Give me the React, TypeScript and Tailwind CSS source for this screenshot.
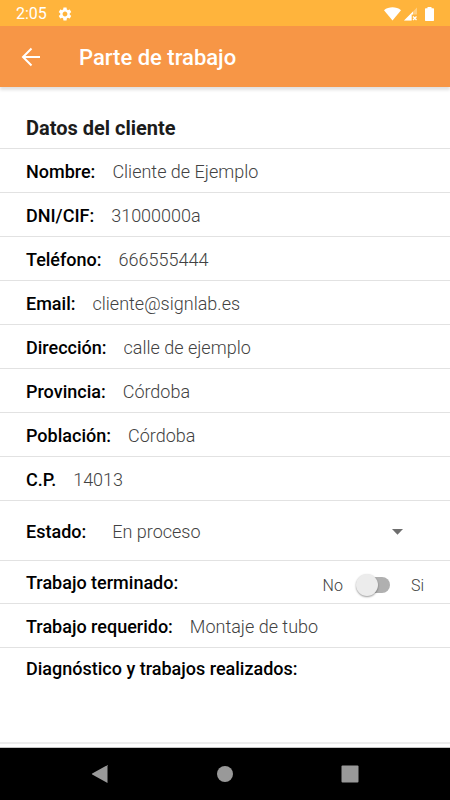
import type { ReactNode } from 'react'
import clsx from 'clsx'

const clientFields = [
  { id: 'nombre', label: 'Nombre:', value: 'Cliente de Ejemplo' },
  { id: 'dni', label: 'DNI/CIF:', value: '31000000a' },
  { id: 'telefono', label: 'Teléfono:', value: '666555444' },
  { id: 'email', label: 'Email:', value: 'cliente@signlab.es' },
  { id: 'direccion', label: 'Dirección:', value: 'calle de ejemplo' },
  { id: 'provincia', label: 'Provincia:', value: 'Córdoba' },
  { id: 'poblacion', label: 'Población:', value: 'Córdoba' },
  { id: 'cp', label: 'C.P.', value: '14013' },
]

const labelClass = 'shrink-0 text-lg leading-6 font-medium text-black'
const valueClass = 'min-w-0 flex-1 bg-transparent text-lg leading-6 font-light text-[#424242] outline-none'

export default function App() {
  return (
    <div className="flex min-h-screen flex-col bg-white font-['Roboto',sans-serif]">
      <StatusBar />
      <AppBar />

      <main className="flex-1 border-b border-[#c4c4c4]">
        <form>
          <h2 className="flex h-[62px] items-center border-b border-[#e2e2e2] px-[26px] pt-5 text-xl leading-6 font-bold text-[#1c1c1c]">
            Datos del cliente
          </h2>

          {clientFields.map((field) => (
            <TextField key={field.id} {...field} />
          ))}

          <Row className="h-[60px] gap-[26px] pt-[2px]">
            <label htmlFor="estado" className={labelClass}>Estado:</label>
            <div className="relative flex flex-1 items-center">
              <select id="estado" className={clsx(valueClass, 'appearance-none')} defaultValue="En proceso">
                <option>En proceso</option>
                <option>Terminado</option>
              </select>
              <svg viewBox="0 0 11 6" className="pointer-events-none absolute right-[21px] h-[6px] w-[11px] fill-[#6e6e6e]">
                <path d="M0 0h11L5.500 5.700z" />
              </svg>
            </div>
          </Row>

          <Row className="h-[43px] pt-[2px]">
            <label htmlFor="terminado" className={labelClass}>Trabajo terminado:</label>
            <div className="ml-auto flex items-center pt-1 text-base font-light text-[#424242]">
              <span className="pt-[2px]">No</span>
              <span className="relative mr-[21px] ml-[13px] flex h-6 w-[34px] items-center">
                <input id="terminado" type="checkbox" role="switch" className="peer absolute inset-0 z-10 opacity-0" />
                <span className="ml-1 h-4 w-[30px] rounded-full bg-[#b0b0b0] peer-checked:bg-[#fbc99f]" />
                <span className="absolute left-0 h-[22px] w-[22px] rounded-full bg-[#ececec] shadow-[0_1px_2px_rgba(0,0,0,0.4)] peer-checked:left-3 peer-checked:bg-[#f79646]" />
              </span>
              <span className="pt-[2px]">Si</span>
            </div>
          </Row>

          <TextField id="requerido" label="Trabajo requerido:" value="Montaje de tubo" />

          <div className="flex h-24 flex-col border-b-2 border-[#ececec] px-[26px] pt-[9px]">
            <label htmlFor="diagnostico" className={labelClass}>Diagnóstico y trabajos realizados:</label>
            <textarea id="diagnostico" className={clsx(valueClass, 'resize-none')} />
          </div>
        </form>
      </main>

      <SystemNav />
    </div>
  )
}

function Row({ children, className }: { children: ReactNode; className?: string }) {
  return <div className={clsx('flex items-center border-b border-[#e2e2e2] px-[26px]', className)}>{children}</div>
}

function TextField({ id, label, value }: { id: string; label: string; value: string }) {
  return (
    <Row className="h-11 gap-[17px] pt-[2px]">
      <label htmlFor={id} className={labelClass}>{label}</label>
      <input id={id} type="text" defaultValue={value} className={valueClass} />
    </Row>
  )
}

function StatusBar() {
  return (
    <div className="flex h-[26px] items-center bg-[#ffb43c] px-4 pt-[2px] text-white">
      <span className="text-base leading-6">2:05</span>
      <svg viewBox="0 0 24 24" className="ml-[10px] h-4 w-4 fill-current">
        <path d="M19.140 12.940c.04-.3.060-.61.060-.94 0-.32-.02-.64-.07-.94l2.030-1.580c.18-.14.230-.41.120-.61l-1.920-3.320c-.12-.22-.37-.29-.59-.22l-2.390.96c-.5-.38-1.030-.7-1.620-.94l-.36-2.540c-.04-.24-.24-.41-.48-.41h-3.840c-.24 0-.43.170-.47.410l-.36 2.540c-.59.240-1.130.570-1.620.940l-2.390-.96c-.22-.08-.47 0-.59.220L2.740 8.870c-.12.210-.08.470.120.610l2.030 1.580c-.05.300-.09.630-.09.940s.02.640.070.940l-2.030 1.580c-.18.140-.23.410-.12.610l1.920 3.320c.12.220.37.290.59.220l2.390-.96c.5.380 1.030.700 1.620.940l.36 2.540c.05.240.24.410.48.410h3.840c.24 0 .44-.17.470-.41l.36-2.540c.59-.24 1.130-.56 1.620-.94l2.390.96c.22.080.47 0 .59-.22l1.920-3.320c.12-.22.070-.47-.12-.61l-2.010-1.580zM12 15.600c-1.980 0-3.600-1.620-3.600-3.600s1.620-3.600 3.600-3.600 3.600 1.620 3.600 3.600-1.620 3.600-3.600 3.600z" />
      </svg>

      <div className="ml-auto flex items-center gap-[3px]">
        <svg viewBox="0 0 17 14" className="h-[14px] w-[17px] fill-current">
          <path d="M0 3.200C4.800-.6 12.200-.6 17 3.200L8.500 13.500z" />
        </svg>
        <svg viewBox="0 0 14 14" className="h-[14px] w-[14px]">
          <path d="M13 0.500v7H8v6H0z" fill="#fff" fillOpacity="0.35" />
          <path d="M9 4.500v3H7.500v6H0z" fill="#fff" />
          <path d="M9 9.500l3.500 3.500M12.500 9.500L9 13" stroke="#fff" strokeWidth="1.300" fill="none" />
        </svg>
        <svg viewBox="0 0 9 14" className="ml-1 h-[14px] w-[9px] fill-current">
          <path d="M2.500 0h4v1.200H8.300q.7 0 .7.700V13.300q0 .7-.7.700H.7q-.7 0-.7-.7V1.900q0-.7.7-.7h1.800z" />
        </svg>
      </div>
    </div>
  )
}

function AppBar() {
  return (
    <header className="z-10 flex h-[61px] items-center gap-[38px] bg-[#f79646] pl-[21px] text-white shadow-[0_3px_3px_rgba(0,0,0,0.12)]">
      <button type="button" aria-label="Volver" className="flex h-10 w-5 items-center">
        <svg viewBox="0 0 20 20" className="h-5 w-5 fill-none stroke-current stroke-2">
          <path d="M19 10H2.500M10.500 1.500L2 10l8.500 8.500" />
        </svg>
      </button>
      <h1 className="pt-[2px] text-[22px] leading-7 font-medium">Parte de trabajo</h1>
    </header>
  )
}

function SystemNav() {
  return (
    <nav className="flex h-[52px] items-center justify-center gap-[107px] bg-black">
      <button type="button" aria-label="Atrás">
        <svg viewBox="0 0 18 18" className="h-[18px] w-[18px] fill-[#999]">
          <path d="M16.500.3V17.700q0 .3-.4.100L1.200 9.500q-.7-.5 0-1L16.100.2q.4-.2.400.1z" />
        </svg>
      </button>
      <button type="button" aria-label="Inicio">
        <svg viewBox="0 0 18 18" className="h-[18px] w-[18px] fill-[#999]">
          <circle cx="9" cy="9" r="8" />
        </svg>
      </button>
      <button type="button" aria-label="Recientes">
        <svg viewBox="0 0 18 18" className="h-[18px] w-[18px] fill-[#999]">
          <rect x="0.500" y="0.500" width="17" height="17" rx="1" />
        </svg>
      </button>
    </nav>
  )
}
